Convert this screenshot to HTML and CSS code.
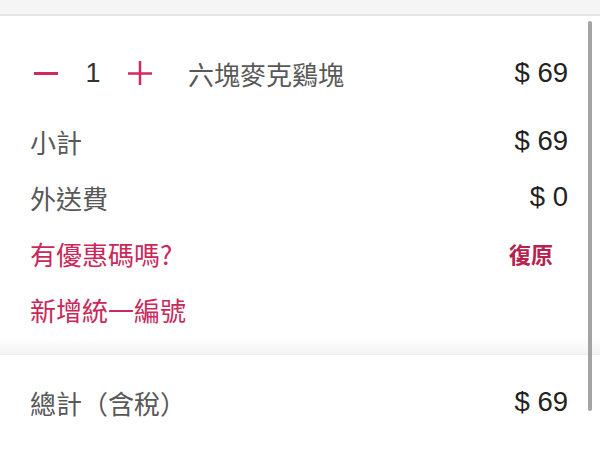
FILE: index.html
```html
<!DOCTYPE html>
<html lang="zh-Hant">
<head>
    <meta charset="UTF-8">
    <meta name="viewport" content="width=device-width, initial-scale=1.0">
    <title>購物車</title>
    <link rel="stylesheet" href="styles.css">
</head>
<body>

<div class="topbar"></div>

<div class="order">
    <div class="row item-row">
        <div class="stepper">
            <button class="step-btn minus" aria-label="減少">
                <svg width="24" height="24" viewBox="0 0 24 24"><path d="M0 12.5H24" stroke="currentColor" stroke-width="3"/></svg>
            </button>
            <span class="qty">1</span>
            <button class="step-btn plus" aria-label="增加">
                <svg width="24" height="24" viewBox="0 0 24 24"><path d="M0 12.5H24M12 0V25" stroke="currentColor" stroke-width="2.5"/></svg>
            </button>
        </div>
        <span class="item-name">六塊麥克鷄塊</span>
        <span class="price">$ 69</span>
    </div>

    <div class="row">
        <span class="label">小計</span>
        <span class="price">$ 69</span>
    </div>
    <div class="row">
        <span class="label">外送費</span>
        <span class="price">$ 0</span>
    </div>
    <div class="row">
        <a class="link">有優惠碼嗎?</a>
        <a class="reset">復原</a>
    </div>
    <div class="row">
        <a class="link">新增統一編號</a>
    </div>
</div>

<div class="total">
    <div class="row">
        <span class="label">總計（含稅）</span>
        <span class="price">$ 69</span>
    </div>
</div>

<div class="scrollbar"></div>

</body>
</html>
```

FILE: styles.css
```css
body {
    margin: 0;
    padding: 0;
    background-color: #fff;
    font-family: "Liberation Sans", "Noto Sans CJK TC", sans-serif;
    color: #333;
    width: 600px;
    height: 450px;
    overflow: hidden;
    position: relative;
}

.topbar {
    height: 14px;
    background-color: #f5f5f5;
    border-bottom: 2px solid #e6e6e6;
}

.order {
    padding: 29px 0 17px;
    background: linear-gradient(to bottom, #fff 0, #fff 322px, #f3f3f3 100%);
    border-bottom: 1px solid #ececec;
}

.row {
    display: flex;
    align-items: center;
    justify-content: space-between;
    height: 56px;
    padding: 0 32px 0 30px;
    font-size: 26px;
}

.item-row {
    justify-content: flex-start;
    margin-bottom: 12px;
}

.stepper {
    display: flex;
    align-items: center;
}

.step-btn {
    background: none;
    border: none;
    padding: 0;
    color: #d2295c;
    display: flex;
    cursor: pointer;
}

.step-btn.minus {
    margin-left: 4px;
}

.qty {
    width: 38px;
    margin: 0 16px;
    text-align: center;
    color: #333;
    font-size: 27px;
}

.item-name {
    margin-left: 36px;
    color: #585858;
    font-family: "Noto Sans CJK TC", sans-serif;
}

.price {
    margin-left: auto;
    color: #222;
    font-size: 27.5px;
}

.label {
    color: #585858;
    font-family: "Noto Sans CJK TC", sans-serif;
}

.link {
    color: #c9285a;
    font-family: "Noto Sans CJK TC", sans-serif;
    cursor: pointer;
}

.reset {
    color: #b5224f;
    font-family: "Noto Sans CJK TC", sans-serif;
    font-size: 22px;
    font-weight: bold;
    margin-right: 15px;
    cursor: pointer;
}

.total {
    padding-top: 19px;
}

.scrollbar {
    position: absolute;
    top: 21px;
    left: 588px;
    width: 4px;
    height: 390px;
    border-radius: 2px;
    background-color: #a3a3a3;
}
```
